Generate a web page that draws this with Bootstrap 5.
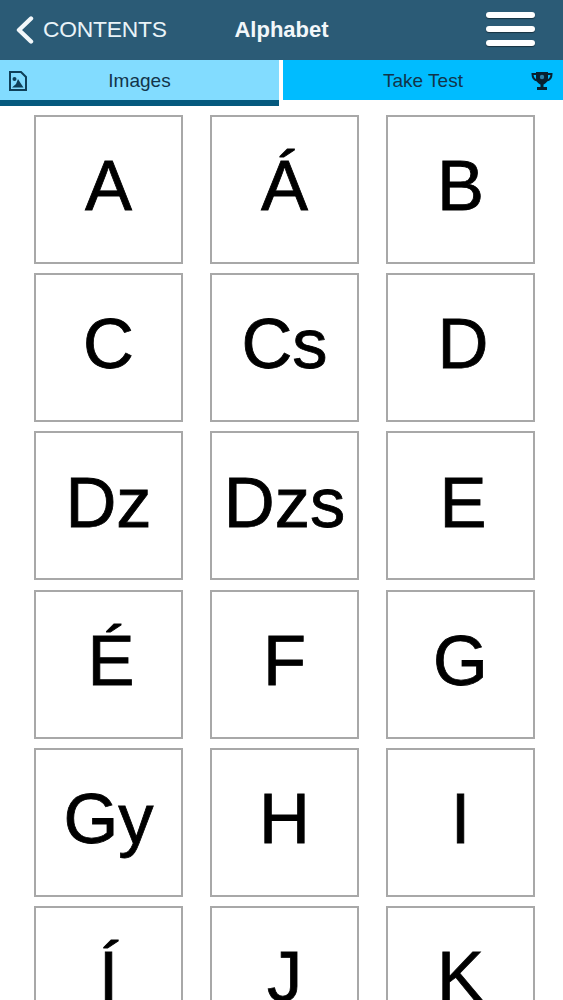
<!DOCTYPE html>
<html lang="hu">
<head>
<meta charset="utf-8">
<title>Alphabet</title>
<link rel="stylesheet" href="https://cdn.jsdelivr.net/npm/bootstrap@5.3.0/dist/css/bootstrap.min.css">
<style>
html,body{height:1000px;overflow:hidden;background:#fff}
body{font-family:"Liberation Sans",Arial,sans-serif;color:#000}
.topbar{height:60px;background:#2b5b76;color:#fff;position:relative}
.backlink{color:#e9f3f8;font-size:22.8px;text-decoration:none;letter-spacing:-.2px;padding-left:15px;padding-bottom:1px}
.backlink svg{margin-right:9px}
.pagetitle{position:absolute;left:0;right:0;top:0;line-height:60px;text-align:center;font-weight:700;font-size:22px;margin:0;color:#f2f7fa}
.burger{width:49px;gap:8px;margin:0 28px 2px 0;position:relative}
.burger span{display:block;height:6px;border-radius:3px;background:#fff;box-shadow:0 1px 1px rgba(0,0,0,.45)}
.tabstrip{height:46px}
.tabitem{font-size:19px;color:#12344a;text-decoration:none;position:relative;padding-top:2px}
.tab-on{width:279px;height:46px;background:#82dcff;border-bottom:6px solid #05597e}
.tab-off{width:280px;margin-left:4px;height:40px;background:#00bcff}
.tabicon{position:absolute;top:50%;transform:translateY(-50%)}
.tab-on .tabicon{left:9px;top:21px}
.tab-off .tabicon{right:10px;top:21px}
.lettergrid{display:grid;grid-template-columns:repeat(3,149px);column-gap:27px;row-gap:9.2px;padding:9px 0 0 34px}
.lettertile{height:149px;border:2px solid #a8a8a8;background:#fff;font-size:70.5px;line-height:1;padding-bottom:6px;color:#000;-webkit-text-stroke:.8px #000}
.tile-nudge{padding-left:5px}
</style>
</head>
<body>
<header class="topbar d-flex align-items-center justify-content-between">
  <a class="backlink d-flex align-items-center" href="#">
    <svg width="19" height="28" viewBox="0 0 19 28" aria-hidden="true"><path d="M16 2.500 4 14l12 11.500" fill="none" stroke="#f2f7fa" stroke-width="4.400" stroke-linecap="round" stroke-linejoin="round"/></svg>
    CONTENTS
  </a>
  <h1 class="pagetitle">Alphabet</h1>
  <div class="burger d-flex flex-column" aria-label="Menu"><span></span><span></span><span></span></div>
</header>
<nav class="tabstrip d-flex align-items-start">
  <a class="tabitem tab-on d-flex align-items-center justify-content-center" href="#">
    <svg class="tabicon" width="18" height="20" viewBox="0 0 18 20" aria-hidden="true"><path d="M1 1h11l5 5v13H1z" fill="none" stroke="#0f4059" stroke-width="2"/><circle cx="5.500" cy="8" r="2" fill="#0f4059"/><path d="M3 16.500 7 13l2-5 2.500 4 3 4.500z" fill="#0f4059"/></svg>
    Images
  </a>
  <a class="tabitem tab-off d-flex align-items-center justify-content-center" href="#">
    Take Test
    <svg class="tabicon" width="22" height="20" viewBox="0 0 22 20" aria-hidden="true"><path d="M5 1h12v6c0 4-3 6-4.500 6.500V16H16v3H6v-3h3.500v-2.500C8 13 5 11 5 7z" fill="#07202f"/><path d="M5 3H1.500c0 4 1.500 6 5 6.500M17 3h3.500c0 4-1.500 6-5 6.500" fill="none" stroke="#07202f" stroke-width="2"/><circle cx="11" cy="6" r="2.200" fill="#2a7fa6"/></svg>
  </a>
</nav>
<main class="lettergrid">
  <div class="lettertile d-flex align-items-center justify-content-center">A</div>
  <div class="lettertile d-flex align-items-center justify-content-center">Á</div>
  <div class="lettertile d-flex align-items-center justify-content-center">B</div>
  <div class="lettertile d-flex align-items-center justify-content-center">C</div>
  <div class="lettertile d-flex align-items-center justify-content-center">Cs</div>
  <div class="lettertile tile-nudge d-flex align-items-center justify-content-center">D</div>
  <div class="lettertile d-flex align-items-center justify-content-center">Dz</div>
  <div class="lettertile d-flex align-items-center justify-content-center">Dzs</div>
  <div class="lettertile tile-nudge d-flex align-items-center justify-content-center">E</div>
  <div class="lettertile tile-nudge d-flex align-items-center justify-content-center">É</div>
  <div class="lettertile d-flex align-items-center justify-content-center">F</div>
  <div class="lettertile d-flex align-items-center justify-content-center">G</div>
  <div class="lettertile d-flex align-items-center justify-content-center">Gy</div>
  <div class="lettertile d-flex align-items-center justify-content-center">H</div>
  <div class="lettertile d-flex align-items-center justify-content-center">I</div>
  <div class="lettertile d-flex align-items-center justify-content-center">Í</div>
  <div class="lettertile d-flex align-items-center justify-content-center">J</div>
  <div class="lettertile d-flex align-items-center justify-content-center">K</div>
</main>
<script src="https://cdn.jsdelivr.net/npm/bootstrap@5.3.0/dist/js/bootstrap.bundle.min.js"></script>
</body>
</html>
